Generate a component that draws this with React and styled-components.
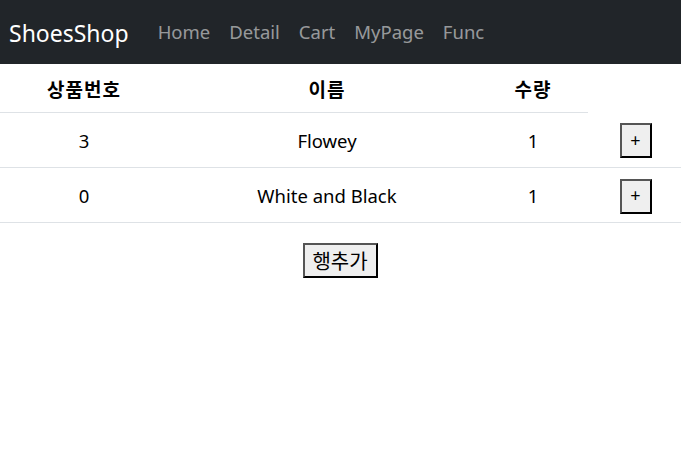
import styled, { createGlobalStyle } from 'styled-components';

const items = [
  { id: 3, name: 'Flowey', count: 1 },
  { id: 0, name: 'White and Black', count: 1 },
];

export default function App() {
  return (
    <>
      <GlobalStyle />
      <Navbar>
        <Brand>ShoesShop</Brand>
        <NavLinks>
          <NavLink>Home</NavLink>
          <NavLink>Detail</NavLink>
          <NavLink>Cart</NavLink>
          <NavLink>MyPage</NavLink>
          <NavLink>Func</NavLink>
        </NavLinks>
      </Navbar>
      <CartTable>
        <colgroup>
          <col style={{ width: 168 }} />
          <col style={{ width: 318 }} />
          <col style={{ width: 102 }} />
          <col />
        </colgroup>
        <thead>
          <tr>
            <HeadCell>상품번호</HeadCell>
            <HeadCell>이름</HeadCell>
            <HeadCell>수량</HeadCell>
          </tr>
        </thead>
        <tbody>
          {items.map((item) => (
            <BodyRow key={item.id}>
              <Cell>{item.id}</Cell>
              <Cell>{item.name}</Cell>
              <Cell>{item.count}</Cell>
              <Cell>
                <PlusButton>+</PlusButton>
              </Cell>
            </BodyRow>
          ))}
        </tbody>
      </CartTable>
      <Footer>
        <AddRowButton>행추가</AddRowButton>
      </Footer>
    </>
  );
}

const GlobalStyle = createGlobalStyle`
  body {
    margin: 0;
    background: #fff;
    color: #212529;
    font-family: "Noto Sans", "Noto Sans CJK KR", sans-serif;
  }
`;

const Navbar = styled.nav`
  display: flex;
  align-items: center;
  height: 64px;
  padding: 0 9px;
  background-color: #212529;
`;

const Brand = styled.span`
  margin-right: 29px;
  color: #fff;
  font-size: 23px;
  line-height: 30px;
  padding-top: 1px;
`;

const NavLinks = styled.div`
  display: flex;
  gap: 19px;
`;

const NavLink = styled.span`
  color: rgba(255, 255, 255, 0.55);
  font-size: 18.5px;
  line-height: 24px;
  cursor: pointer;
`;

const CartTable = styled.table`
  width: 100%;
  table-layout: fixed;
  border-collapse: collapse;
  text-align: center;
`;

const HeadCell = styled.th`
  height: 48px;
  padding: 0;
  font-size: 19px;
  letter-spacing: 1px;
  font-weight: 700;
  font-family: "Noto Sans CJK KR", sans-serif;
  color: #000;
  border-bottom: 1px solid #dee2e6;
  vertical-align: middle;

  &:nth-child(3) {
    padding-right: 8px;
  }
`;

const BodyRow = styled.tr`
  border-bottom: 1px solid #dee2e6;
`;

const Cell = styled.td`
  height: 54px;
  padding: 0;
  font-size: 18.5px;
  color: #000;
  vertical-align: middle;

  &:nth-child(3) {
    padding-right: 8px;
  }
`;

const PlusButton = styled.button`
  width: 32px;
  height: 35px;
  padding: 0 0 2px;
  margin: 2px 0 0 2px;
  background: #efefef;
  border: 2px solid;
  border-color: #555 #000 #000 #555;
  font-family: "Noto Sans", sans-serif;
  font-size: 18px;
  line-height: 28px;
  color: #000;
  cursor: pointer;
`;

const Footer = styled.div`
  display: flex;
  justify-content: center;
  padding-top: 20px;
`;

const AddRowButton = styled.button`
  width: 75px;
  height: 35px;
  padding: 0;
  margin-left: -1px;
  background: #efefef;
  border: 2px solid;
  border-color: #555 #000 #000 #555;
  font-family: "Noto Sans CJK KR", sans-serif;
  font-size: 20px;
  line-height: 28px;
  color: #000;
  cursor: pointer;
`;
